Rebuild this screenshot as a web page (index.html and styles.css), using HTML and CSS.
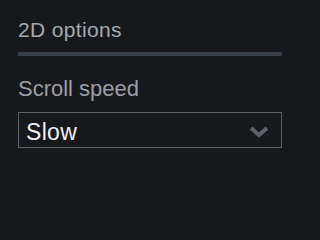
FILE: index.html
```html
<!DOCTYPE html>
<html>
<head>
<meta charset="utf-8">
<link rel="stylesheet" href="styles.css">
</head>
<body>
<div class="panel">
  <h2 class="section-title">2D options</h2>
  <div class="rule"></div>
  <label class="field-label">Scroll speed</label>
  <div class="select">
    <span class="select-value">Slow</span>
    <svg class="chevron" width="20" height="12" viewBox="0 0 20 12"><polyline points="2,2 10,9 18,2" fill="none" stroke="#5c636a" stroke-width="4" stroke-linejoin="miter"/></svg>
  </div>
</div>
</body>
</html>
```
FILE: styles.css
```css
html, body {
  margin: 0;
  padding: 0;
  background: #17181c;
  font-family: "Liberation Sans", Arial, sans-serif;
}
.panel {
  width: 264px;
  margin-left: 18px;
  padding-top: 18px;
  display: flex;
  flex-direction: column;
}
.section-title {
  margin: 0;
  font-size: 21px;
  line-height: 24px;
  font-weight: normal;
  color: #a6aaae;
  letter-spacing: 0.35px;
}
.rule {
  margin-top: 10px;
  height: 4px;
  background: #393f46;
}
.field-label {
  margin-top: 20px;
  font-size: 22px;
  line-height: 26px;
  color: #9b9fa3;
}
.select {
  margin-top: 10px;
  height: 34px;
  border: 1px solid #5d6166;
  display: flex;
  align-items: center;
  justify-content: space-between;
  padding: 0 12px 0 7px;
}
.select-value {
  font-size: 23px;
  line-height: 34px;
  padding-top: 3px;
  color: #efefef;
  letter-spacing: 0.3px;
}
.chevron {
  display: block;
  margin-top: 3px;
}
```
